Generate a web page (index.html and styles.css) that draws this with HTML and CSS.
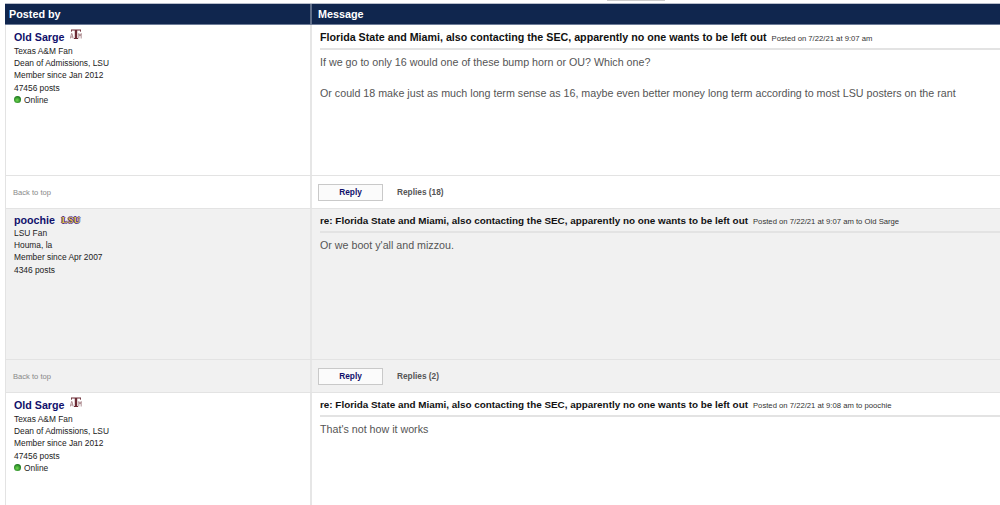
FILE: index.html
```html
<!DOCTYPE html>
<html lang="en">
<head>
<meta charset="utf-8">
<title>Thread</title>
<link rel="stylesheet" href="styles.css">
</head>
<body>
<div class="topbar"><div class="topbtn"></div></div>
<main class="board">
  <div class="row head">
    <div class="left">Posted by</div>
    <div class="right">Message</div>
  </div>

  <div class="row post">
    <div class="left author">
      <div class="nameline"><a class="name">Old Sarge</a>
        <svg class="logo-am" viewBox="0 0 12 11" aria-hidden="true"><path d="M1 .5h10v2.2h-.8V1.6H7.2V9h.8v1H4V9h.8V1.6H1.8v1.1H1z" fill="#6b2a35"/><path d="M.3 9.5 1.6 4.5h.4l1.2 5M.8 8h2M8.8 9.5v-5l1.2 2.6 1.2-2.6v5" fill="none" stroke="#8f6169" stroke-width=".7"/></svg>
      </div>
      <div class="info">Texas A&amp;M Fan</div>
      <div class="info">Dean of Admissions, LSU</div>
      <div class="info">Member since Jan 2012</div>
      <div class="info">47456 posts</div>
      <div class="info online"><span class="dot"></span>Online</div>
    </div>
    <div class="right message">
      <div class="subject"><b>Florida State and Miami, also contacting the SEC, apparently no one wants to be left out</b><span class="meta">Posted on 7/22/21 at 9:07 am</span></div>
      <p class="body">If we go to only 16 would one of these bump horn or OU? Which one?</p>
      <p class="body para">Or could 18 make just as much long term sense as 16, maybe even better money long term according to most LSU posters on the rant</p>
    </div>
  </div>
  <div class="row foot">
    <div class="left"><a class="top">Back to top</a></div>
    <div class="right actions"><button class="reply">Reply</button><a class="replies">Replies (18)</a></div>
  </div>

  <div class="row post alt">
    <div class="left author">
      <div class="nameline short"><a class="name">poochie</a><span class="logo-lsu">LSU</span></div>
      <div class="info">LSU Fan</div>
      <div class="info">Houma, la</div>
      <div class="info">Member since Apr 2007</div>
      <div class="info">4346 posts</div>
    </div>
    <div class="right message">
      <div class="subject re"><b>re: Florida State and Miami, also contacting the SEC, apparently no one wants to be left out</b><span class="meta">Posted on 7/22/21 at 9:07 am to Old Sarge</span></div>
      <p class="body">Or we boot y'all and mizzou.</p>
    </div>
  </div>
  <div class="row foot alt">
    <div class="left"><a class="top">Back to top</a></div>
    <div class="right actions"><button class="reply">Reply</button><a class="replies">Replies (2)</a></div>
  </div>

  <div class="row post">
    <div class="left author">
      <div class="nameline"><a class="name">Old Sarge</a>
        <svg class="logo-am" viewBox="0 0 12 11" aria-hidden="true"><path d="M1 .5h10v2.2h-.8V1.6H7.2V9h.8v1H4V9h.8V1.6H1.8v1.1H1z" fill="#6b2a35"/><path d="M.3 9.5 1.6 4.5h.4l1.2 5M.8 8h2M8.8 9.5v-5l1.2 2.6 1.2-2.6v5" fill="none" stroke="#8f6169" stroke-width=".7"/></svg>
      </div>
      <div class="info">Texas A&amp;M Fan</div>
      <div class="info">Dean of Admissions, LSU</div>
      <div class="info">Member since Jan 2012</div>
      <div class="info">47456 posts</div>
      <div class="info online"><span class="dot"></span>Online</div>
    </div>
    <div class="right message">
      <div class="subject re"><b>re: Florida State and Miami, also contacting the SEC, apparently no one wants to be left out</b><span class="meta">Posted on 7/22/21 at 9:08 am to poochie</span></div>
      <p class="body">That's not how it works</p>
    </div>
  </div>
</main>
</body>
</html>
```

FILE: styles.css
```css
* { box-sizing: border-box; }
html, body { margin: 0; padding: 0; height: 505px; overflow: hidden; background: #fff; }
body { font-family: "Liberation Sans", Arial, sans-serif; color: #222; }

.topbar { height: 3px; }
.topbtn { width: 58px; height: 1px; margin-left: 607px; background: #ccc; }

.board { margin-left: 5px; width: 1010px; border-left: 1px solid #e3e3e3; }
.row { display: flex; }
.left { width: 304px; flex: none; }
.right { flex: 1; border-left: 2px solid #e6e6e6; }

.head { height: 22px; background: #10264e; border-top: 1px solid #b9bfcc; border-bottom: 1px solid #6d7c98; color: #fff; font-size: 10.8px; font-weight: bold; line-height: 20px; margin-left: -1px; }
.head .left { width: 305px; padding-left: 4px; }
.head .right { border-left: 2px solid #5d6c88; padding-left: 6px; }

.post { height: 150px; }
.post:last-child { height: 115px; }
.foot { height: 34px; border-top: 1px solid #e3e3e3; border-bottom: 1px solid #e3e3e3; }
.alt { background: #f1f1f1; }

.author { padding: 5px 0 0 8px; }
.nameline { display: flex; align-items: flex-start; height: 15px; }
.nameline.short { height: 12px; margin-top: -1px; margin-bottom: 2px; }
.name { font-size: 10.7px; font-weight: bold; color: #10106b; line-height: 14px; }
.logo-am { width: 12px; height: 11px; margin: -1px 0 0 6px; }
.logo-lsu { margin: 3px 0 0 6px; width: 20px; height: 8px; color: #e8c840; font: bold 9px/8px "Liberation Serif", serif; text-align: center; letter-spacing: .5px; text-shadow: 1px 0 0 #4b2a86, -1px 0 0 #4b2a86, 0 1px 0 #4b2a86, 0 -1px 0 #4b2a86; }
.info { font-size: 8.4px; line-height: 12.2px; color: #222; }
.online { display: flex; align-items: center; }
.dot { width: 7px; height: 7px; margin-right: 3px; border-radius: 50%; background: radial-gradient(circle at 45% 60%, #6fd84f, #14701a 75%); }

.message { padding: 5px 0 0 8px; }
.subject { height: 20px; border-bottom: 2px solid #e3e3e3; font-size: 10.7px; line-height: 14px; color: #111; white-space: nowrap; }
.subject.re { height: 19px; font-size: 9.9px; }
.meta { margin-left: 5px; font-size: 7.7px; color: #333; }
.body { margin: 6px 0 0; font-size: 10.7px; line-height: 13px; color: #555; white-space: nowrap; }
.para { margin-top: 18px; }

.foot .left { display: flex; align-items: center; padding-left: 7px; }
.top { font-size: 7.6px; color: #888; }
.actions { display: flex; align-items: center; padding-left: 6px; }
.reply { width: 65px; height: 17px; padding: 0; background: #fbfbfb; border: 1px solid #c9c9c9; font: bold 8.3px "Liberation Sans", sans-serif; color: #10106b; }
.replies { margin-left: 14px; font-size: 8.3px; font-weight: bold; color: #555; }
```
